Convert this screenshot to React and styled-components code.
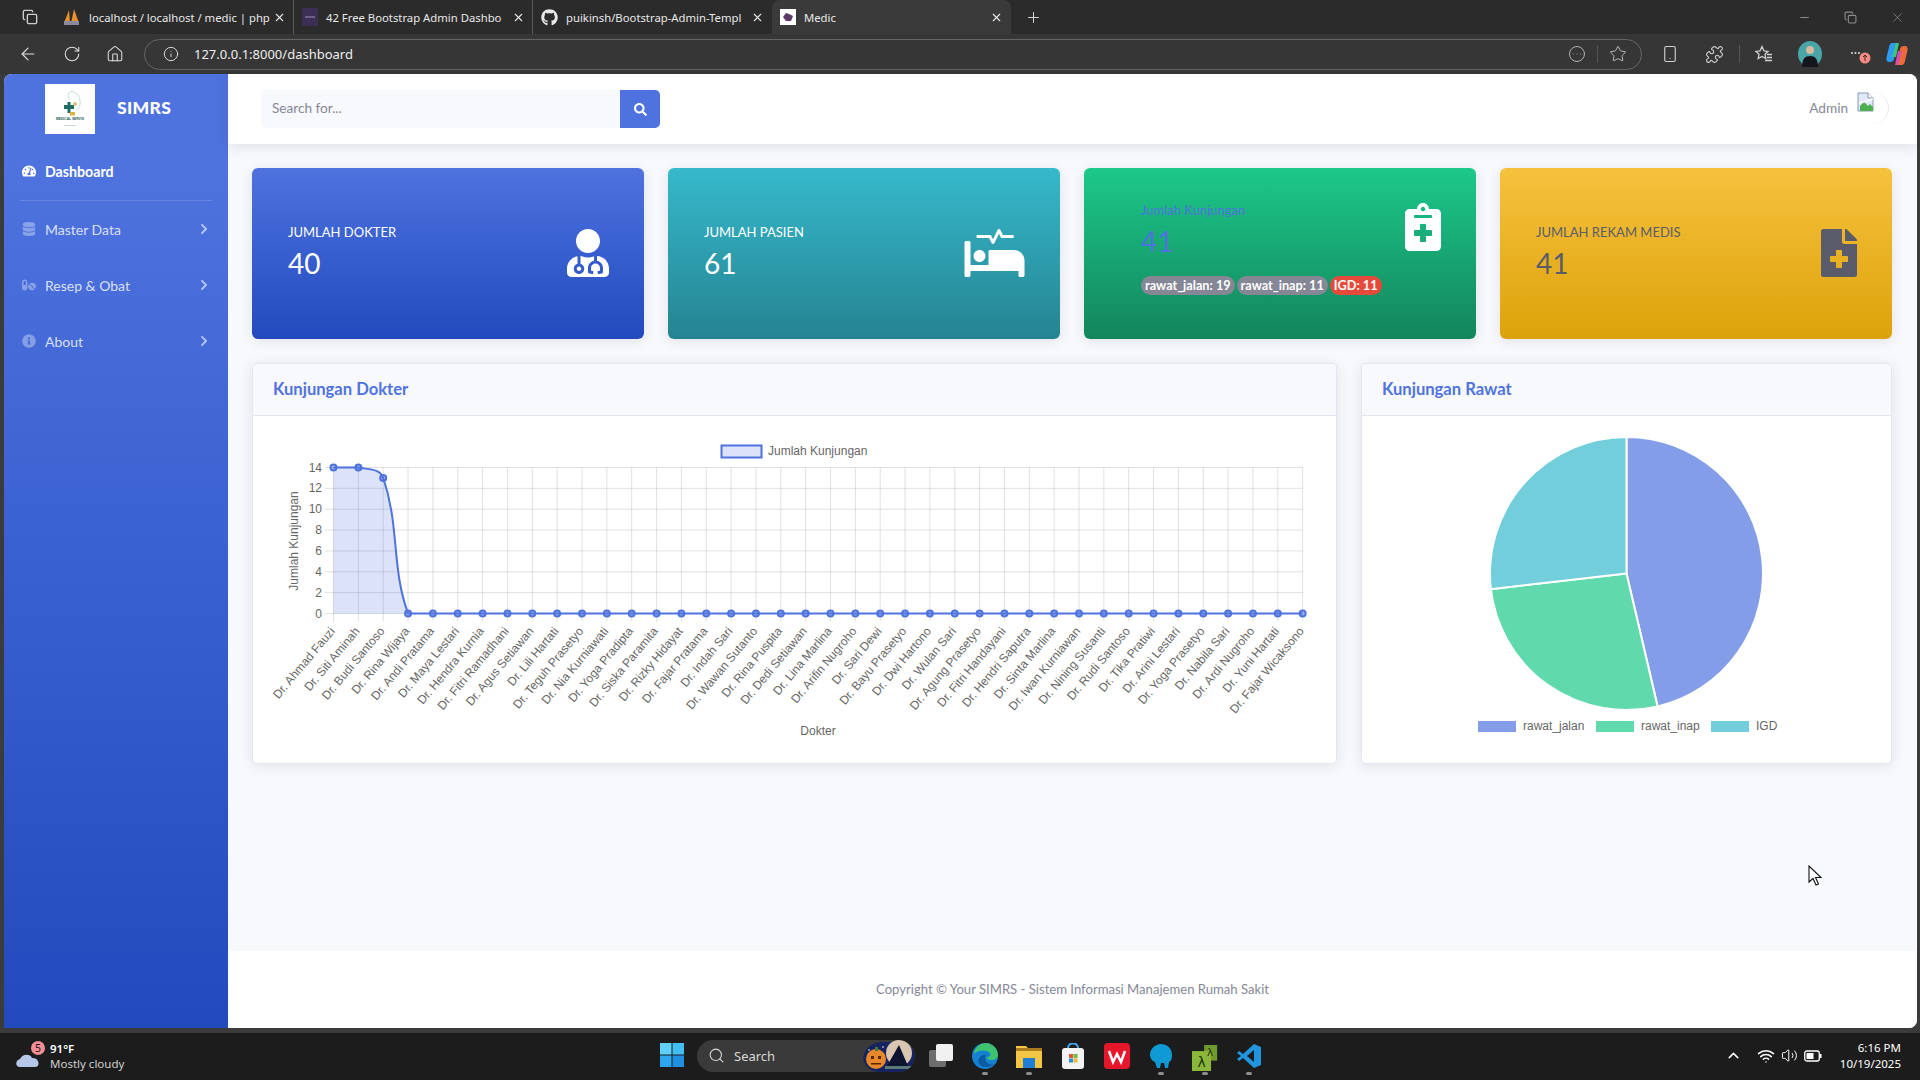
import * as React from 'react'
import styled, { createGlobalStyle } from 'styled-components'
import {
  ArrowLeft, RotateCw, Home, Info, Star, Smartphone, Puzzle, Plus, Minus, X, Copy,
  Search as SearchGlyph, ChevronUp, Wifi, Volume2, CircleEllipsis
} from 'lucide-react'
import {
  FaTachometerAlt, FaDatabase, FaPills, FaInfoCircle, FaChevronRight, FaSearch,
  FaUserMd, FaProcedures, FaNotesMedical, FaFileMedical, FaGithub
} from 'react-icons/fa'

const DOCTORS = [
  'Ahmad Fauzi', 'Siti Aminah', 'Budi Santoso', 'Rina Wijaya', 'Andi Pratama', 'Maya Lestari',
  'Hendra Kurnia', 'Fitri Ramadhani', 'Agus Setiawan', 'Lili Hartati', 'Teguh Prasetyo',
  'Nia Kurniawati', 'Yoga Pradipta', 'Siska Paramita', 'Rizky Hidayat', 'Fajar Pratama',
  'Indah Sari', 'Wawan Sutanto', 'Rina Puspita', 'Dedi Setiawan', 'Lina Marlina', 'Arifin Nugroho',
  'Sari Dewi', 'Bayu Prasetyo', 'Dwi Hartono', 'Wulan Sari', 'Agung Prasetyo', 'Fitri Handayani',
  'Hendri Saputra', 'Sinta Marlina', 'Iwan Kurniawan', 'Nining Susanti', 'Rudi Santoso',
  'Tika Pratiwi', 'Arini Lestari', 'Yoga Prasetyo', 'Nabila Sari', 'Ardi Nugroho', 'Yuni Hartati',
  'Fajar Wicaksono'
].map((n) => `Dr. ${n}`)

const VISITS = DOCTORS.map((_, i) => [14, 14, 13][i] || 0)

const GlobalStyle = createGlobalStyle`
  html, body { margin: 0; padding: 0; background: #3a3a3a; overflow: hidden; }
  * { box-sizing: border-box; }
`

const Screen = styled.div`
  position: relative;
  width: 1920px;
  height: 1080px;
  display: flex;
  flex-direction: column;
  background: #3b3b3b;
  font-family: "Lato", "Liberation Sans", sans-serif;
`

const TabStrip = styled.div`
  height: 34px;
  display: flex;
  align-items: flex-end;
  background: #2b2b2b;
  padding-left: 12px;
  color: #e8e8e8;
  font: 11.3px "Noto Sans", "Liberation Sans", sans-serif;
`

const WorkspaceBtn = styled.div`
  width: 36px;
  height: 34px;
  margin-right: 7px;
  display: flex;
  align-items: center;
  justify-content: center;
  color: #cfcfcf;
`

const Tab = styled.div`
  width: 239px;
  height: 34px;
  padding: 0 7px 0 8px;
  display: flex;
  align-items: center;
  gap: 8px;
  border-radius: ${({ $active }) => ($active ? '8px 8px 0 0' : '0')};
  background: ${({ $active }) => ($active ? '#3a3a3a' : 'transparent')};
  border-right: 1px solid ${({ $sep }) => ($sep ? '#5a5a5a' : 'transparent')};
`

const TabTitle = styled.span`
  flex: 1;
  min-width: 0;
  white-space: nowrap;
`

const WindowBtns = styled.div`
  margin-left: auto;
  height: 34px;
  display: flex;
  align-items: center;
  gap: 33px;
  padding-right: 15px;
  color: #8c8c8c;
`

const NewTab = styled.div`
  width: 40px;
  height: 34px;
  margin-left: 2px;
  display: flex;
  align-items: center;
  justify-content: center;
  color: #d8d8d8;
`

const Toolbar = styled.div`
  height: 40px;
  display: flex;
  align-items: center;
  background: #363636;
  color: #dedede;
  padding-left: 18px;
`

const NavIcons = styled.div`
  display: flex;
  align-items: center;
  gap: 25px;
  width: 126px;
`

const UrlBar = styled.div`
  width: 1498px;
  height: 31px;
  display: flex;
  align-items: center;
  padding: 0 14px 0 18px;
  border: 1px solid #666;
  border-radius: 16px;
  font: 13px "Noto Sans", "Liberation Sans", sans-serif;
  color: #eee;
`

const UrlText = styled.span`
  margin-left: 15px;
  flex: 1;
`

const UrlActions = styled.div`
  display: flex;
  align-items: center;
  gap: 11px;
  color: #bdbdbd;
`

const VSep = styled.i`
  display: block;
  width: 1px;
  height: 18px;
  background: #555;
`

const ToolIcons = styled.div`
  display: flex;
  align-items: center;
  color: #d0d0d0;
`

const ToolSlot = styled.span`
  display: flex;
  margin-left: ${({ $ml }) => $ml}px;
`

const Page = styled.div`
  height: 954px;
  margin: 0 3px 0 4px;
  display: flex;
  overflow: hidden;
  border-radius: 8px 8px 8px 0;
  background: #f8f9fc;
`

const Sidebar = styled.nav`
  width: 224px;
  flex: none;
  background: linear-gradient(180deg, #4e73df 10%, #224abe 100%);
`

const Brand = styled.div`
  height: 66px;
  padding: 10px 0 0 41px;
  display: flex;
  align-items: flex-start;
  gap: 22px;
`

const LogoBox = styled.div`
  width: 50px;
  height: 50px;
  background: #fff;
  flex: none;
`

const BrandName = styled.div`
  margin-top: 13px;
  color: #fff;
  font-size: 17.5px;
  font-weight: 900;
  letter-spacing: 0.3px;
`

const NavItem = styled.div`
  height: ${({ $active }) => ($active ? 60 : 56)}px;
  display: flex;
  align-items: center;
  padding: ${({ $active }) => ($active ? 2 : 0)}px 18px 0 17px;
  color: ${({ $active }) => ($active ? '#fff' : 'rgba(255,255,255,.8)')};
  font-size: ${({ $active }) => ($active ? 14.2 : 14)}px;
  font-weight: ${({ $active }) => ($active ? 700 : 400)};
`

const NavGlyph = styled.span`
  width: 16px;
  margin-right: 8px;
  display: flex;
  justify-content: center;
  font-size: 14px;
  color: ${({ $active }) => ($active ? '#fff' : 'rgba(255,255,255,.35)')};
`

const NavLabel = styled.span`
  flex: 1;
`

const NavArrow = styled.span`
  display: flex;
  font-size: 12px;
  color: rgba(255,255,255,.6);
`

const NavRule = styled.hr`
  margin: 0 16px;
  border: 0;
  border-top: 1px solid rgba(255,255,255,.15);
`

const Main = styled.div`
  flex: 1;
  min-width: 0;
  display: flex;
  flex-direction: column;
`

const Topbar = styled.header`
  height: 70px;
  display: flex;
  align-items: center;
  justify-content: space-between;
  padding: 0 28px 0 33px;
  background: #fff;
  box-shadow: 0 2px 14px rgba(58,59,69,.14);
`

const SearchForm = styled.div`
  width: 399px;
  height: 38px;
  display: flex;
  border-radius: 5px;
  overflow: hidden;
  background: #f8f9fc;
`

const SearchInput = styled.div`
  flex: 1;
  padding-left: 11px;
  line-height: 36px;
  font-size: 13.6px;
  color: #858796;
`

const SearchBtn = styled.div`
  width: 40px;
  display: flex;
  align-items: center;
  justify-content: center;
  background: #4e73df;
  color: #fff;
  font-size: 13px;
`

const UserBox = styled.div`
  display: flex;
  align-items: center;
  gap: 9px;
  margin-top: -2px;
  font-size: 13.6px;
  color: #858796;
`

const Avatar = styled.div`
  width: 32px;
  height: 32px;
  border-radius: 50%;
  display: flex;
  justify-content: flex-start;
  border-right: 1px solid #e6e6e6;
`

const Content = styled.main`
  flex: 1;
  padding: 24px 25px 0 24px;
`

const StatRow = styled.section`
  display: grid;
  grid-template-columns: repeat(4, minmax(0, 1fr));
  gap: 24px;
`

const StatCard = styled.div`
  height: 171px;
  padding: 0 35px 0 36px;
  display: flex;
  align-items: center;
  justify-content: space-between;
  border-radius: 6px;
  background: linear-gradient(180deg, ${({ $from }) => $from}, ${({ $to }) => $to});
  color: ${({ $ink }) => $ink};
  box-shadow: 0 2px 12px rgba(58,59,69,.12);
`

const StatText = styled.div`
  display: flex;
  flex-direction: column;
  margin-top: ${({ $shift }) => $shift ?? -6}px;
  margin-left: ${({ $indent }) => $indent || 0}px;
`

const StatLabel = styled.div`
  font-size: 13px;
  line-height: 20px;
  margin-bottom: 4px;
  text-transform: ${({ $plain }) => ($plain ? 'none' : 'uppercase')};
`

const StatValue = styled.div`
  font-size: 28px;
  line-height: 34px;
`

const BadgeRow = styled.div`
  display: flex;
  gap: 2px;
  margin-top: 18px;
`

const Badge = styled.span`
  height: 19px;
  padding: 0 4px;
  line-height: 19px;
  border-radius: 10px;
  font-size: 12.7px;
  font-weight: 700;
  color: #fff;
  background: ${({ $bg }) => $bg};
`

const StatIcon = styled.div`
  display: flex;
  margin-top: ${({ $shift }) => $shift ?? -2}px;
  margin-right: ${({ $trim }) => -($trim || 0)}px;
  color: ${({ $ink }) => $ink};
  font-size: 48px;
`

const BedIcon = styled(FaProcedures)`
  width: 61px;
  height: 48px;
`

const ChartRow = styled.section`
  display: grid;
  grid-template-columns: minmax(0, 1085fr) minmax(0, 531fr);
  gap: 24px;
  margin-top: 24px;
`

const Panel = styled.article`
  height: 401px;
  border: 1px solid #e3e6f0;
  border-radius: 5px;
  overflow: hidden;
  background: #fff;
  box-shadow: 0 2px 14px rgba(58,59,69,.12);
`

const PanelHead = styled.div`
  height: 52px;
  padding: 0 0 1px 20px;
  display: flex;
  align-items: center;
  background: #f8f9fc;
  border-bottom: 1px solid #e3e6f0;
  font-size: 16.6px;
  font-weight: 700;
  color: #4e73df;
`

const ChartSvg = styled.svg`
  display: block;
  margin-left: -1px;
  font-family: "Liberation Sans", Arial, sans-serif;
  font-size: 12px;
`

const Footer = styled.footer`
  height: 77px;
  padding-bottom: 2px;
  display: flex;
  align-items: center;
  justify-content: center;
  background: #fff;
  font-size: 13.1px;
  color: #858796;
`

const Taskbar = styled.div`
  margin-top: auto;
  height: 47px;
  padding-bottom: 2px;
  display: grid;
  grid-template-columns: 1fr auto 1fr;
  align-items: center;
  background: #1c1c1c;
  color: #fff;
  font: 12px "Noto Sans", "Liberation Sans", sans-serif;
`

const Weather = styled.div`
  display: flex;
  align-items: center;
  gap: 2px;
  padding-left: 16px;
`

const WeatherText = styled.div`
  line-height: 15px;
  font-size: 11.5px;
  color: #cfcfcf;
`

const Temp = styled.div`
  color: #fff;
  font-weight: 600;
`

const Dock = styled.div`
  display: flex;
  align-items: center;
  gap: 18px;
  margin-left: 2px;
`

const DockSearch = styled.div`
  width: 218px;
  height: 32px;
  margin: 0 -5px 0 -7px;
  display: flex;
  align-items: center;
  gap: 9px;
  padding-left: 11px;
  border-radius: 16px;
  background: #3a3a3a;
  color: #d8d8d8;
  font-size: 13px;
`

const SearchArt = styled.svg`
  margin-left: auto;
  border-radius: 16px;
`

const DockItem = styled.div`
  position: relative;
  display: flex;
  width: 26px;
  height: 26px;
  &::after {
    content: '';
    display: ${({ $open }) => ($open ? 'block' : 'none')};
    position: absolute;
    left: 10px;
    bottom: -6px;
    width: 6px;
    height: 3px;
    border-radius: 2px;
    background: #8d8d8d;
  }
`

const Tray = styled.div`
  justify-self: end;
  display: flex;
  align-items: center;
  gap: 6px;
  padding-right: 19px;
`

const TrayChevron = styled(ChevronUp)`
  margin-right: 9px;
`

const Clock = styled.div`
  margin-left: 12px;
  text-align: right;
  line-height: 16px;
  font-size: 11.5px;
`

const Cursor = styled.svg`
  position: absolute;
  left: 1808px;
  top: 865px;
`

function splinePath(points, top, bottom) {
  // same smoothing as a line chart with tension 0.4
  const clamp = (v) => Math.min(bottom, Math.max(top, v))
  let d = `M${points[0][0]},${points[0][1]}`
  const ctrl = points.map((p, i) => {
    const a = points[i - 1] || p
    const b = points[i + 1] || p
    const d01 = Math.hypot(p[0] - a[0], p[1] - a[1])
    const d12 = Math.hypot(b[0] - p[0], b[1] - p[1])
    const sum = d01 + d12 || 1
    const fa = 0.4 * d01 / sum
    const fb = 0.4 * d12 / sum
    return {
      prev: [p[0] - fa * (b[0] - a[0]), clamp(p[1] - fa * (b[1] - a[1]))],
      next: [p[0] + fb * (b[0] - a[0]), clamp(p[1] + fb * (b[1] - a[1]))]
    }
  })
  for (let i = 1; i < points.length; i++) {
    const c1 = ctrl[i - 1].next
    const c2 = ctrl[i].prev
    d += ` C${c1[0]},${c1[1]} ${c2[0]},${c2[1]} ${points[i][0]},${points[i][1]}`
  }
  return d
}

function LineChart() {
  const x0 = 333.5
  const stepX = 24.85
  const y0 = 613.5
  const y14 = 467.5
  const yOf = (v) => y0 - (v / 14) * (y0 - y14)
  const xOf = (i) => x0 + i * stepX
  const pts = VISITS.map((v, i) => [xOf(i), yOf(v)])
  const line = splinePath(pts, y14, y0)
  const grid = 'rgba(0,0,0,.12)'

  return (
    <ChartSvg width="1085" height="346" viewBox="252 416 1085 346">
      <rect x="721.5" y="445.5" width="40" height="12" fill="rgba(78,115,223,.2)" stroke="#4e73df" strokeWidth="2" />
      <text x="768" y="455" fill="#666">Jumlah Kunjungan</text>
      {[0, 2, 4, 6, 8, 10, 12, 14].map((v) => (
        <g key={v}>
          <line x1="325" x2={xOf(39)} y1={yOf(v)} y2={yOf(v)} stroke={grid} />
          <text x="322" y={yOf(v) + 4} fill="#666" textAnchor="end">{v}</text>
        </g>
      ))}
      {DOCTORS.map((name, i) => (
        <g key={i}>
          <line x1={xOf(i)} x2={xOf(i)} y1={y14} y2={y0 + 8} stroke={grid} />
          <text transform={`translate(${xOf(i) + 2},${y0 + 18}) rotate(-50)`} fill="#666" textAnchor="end">{name}</text>
        </g>
      ))}
      <text transform="translate(298,541) rotate(-90)" fill="#666" textAnchor="middle">Jumlah Kunjungan</text>
      <text x="818" y="735" fill="#666" textAnchor="middle">Dokter</text>
      <path d={`${line} L${xOf(39)},${y0} L${x0},${y0} Z`} fill="rgba(78,115,223,.2)" />
      <path d={line} fill="none" stroke="#4e73df" strokeWidth="2" />
      {pts.map(([x, y], i) => (
        <circle key={i} cx={x} cy={y} r="3" fill="rgba(78,115,223,.5)" stroke="#4e73df" strokeWidth="2" />
      ))}
    </ChartSvg>
  )
}

function PieChart() {
  const cx = 1626.5
  const cy = 573.5
  const r = 136.5
  const data = [
    { label: 'rawat_jalan', value: 19, color: '#839de9', box: 1478, text: 1523 },
    { label: 'rawat_inap', value: 11, color: '#60d9ad', box: 1596, text: 1641 },
    { label: 'IGD', value: 11, color: '#72cedb', box: 1711, text: 1756 }
  ]
  let angle = -Math.PI / 2
  const slices = data.map((d) => {
    const next = angle + (d.value / 41) * Math.PI * 2
    const large = next - angle > Math.PI ? 1 : 0
    const p = `M${cx},${cy} L${cx + r * Math.cos(angle)},${cy + r * Math.sin(angle)} A${r},${r} 0 ${large} 1 ${cx + r * Math.cos(next)},${cy + r * Math.sin(next)} Z`
    angle = next
    return { ...d, p }
  })

  return (
    <ChartSvg width="531" height="346" viewBox="1361 416 531 346">
      {slices.map((s) => <path key={s.label} d={s.p} fill={s.color} stroke="#fff" strokeWidth="2" />)}
      {slices.map((s) => (
        <g key={s.label}>
          <rect x={s.box} y="721" width="38" height="11" fill={s.color} />
          <text x={s.text} y="730" fill="#666">{s.label}</text>
        </g>
      ))}
    </ChartSvg>
  )
}

const PmaIcon = () => (
  <svg width="18" height="18" viewBox="0 0 18 18">
    <path d="M1 15 6 2l1 13zM8 15 11 1l5 14z" fill="#e8912d" />
    <rect x="1" y="13" width="15" height="4" fill="#8a8a9c" />
  </svg>
)

const ColorlibIcon = () => (
  <svg width="16" height="18" viewBox="0 0 16 18">
    <rect width="16" height="18" fill="#3c2f55" />
    <rect x="3" y="8" width="10" height="2" fill="#6d5f86" />
  </svg>
)

const MedicIcon = () => (
  <svg width="16" height="16" viewBox="0 0 16 16">
    <rect width="16" height="16" fill="#fff" />
    <path d="M3 8l3-4 3 1 4 2-2 5H6z" fill="#5b3a68" />
  </svg>
)

const FavoritesIcon = () => (
  <svg width="20" height="20" viewBox="0 0 20 20" fill="none" stroke="currentColor" strokeWidth="1.3">
    <path d="M8 2.5 10 7l4 .4-3 2.8.8 4.3L8 12.4 4.2 14.5 5 10.2 2 7.4 6 7z" />
    <path d="M13 10.5h5M13 13.500h5M11 16.500h7" />
  </svg>
)

const ProfilePic = () => (
  <svg width="24" height="26" viewBox="0 0 24 26">
    <ellipse cx="12" cy="13" rx="12" ry="13" fill="#4aa5a8" />
    <path d="M4 26c0-8 3-11 8-11s8 3 8 11z" fill="#15151c" />
    <circle cx="12" cy="9" r="4" fill="#d9b9a0" />
  </svg>
)

const CopilotIcon = () => (
  <svg width="22" height="24" viewBox="0 0 22 24">
    <path d="M6 1h5L8 17c-.5 2-2 3-4 3H3c-2 0-3-2-2.600-4L3 5c.4-2 1.500-4 3-4z" fill="#2f9bf0" />
    <path d="M16 23h-5l3-16c.5-2 2-3 4-3h1c2 0 3 2 2.600 4L19 19c-.4 2-1.500 4-3 4z" fill="#ee6a3a" />
    <path d="M10 1h3l-3 14H6z" fill="#38c77c" />
    <path d="M12 23H9l3-14h4z" fill="#d64fb0" />
  </svg>
)

const UpdateDots = () => (
  <svg width="24" height="22" viewBox="0 0 24 22">
    <circle cx="4" cy="10" r="1" fill="#ddd" />
    <circle cx="7.500" cy="10" r="1" fill="#ddd" />
    <circle cx="11" cy="10" r="1" fill="#ddd" />
    <circle cx="17" cy="15" r="5.500" fill="#f28b82" />
    <path d="M17 18v-6M15 14l2-2 2 2" stroke="#422" strokeWidth="1" fill="none" />
  </svg>
)

const LogoMark = () => (
  <svg width="50" height="50" viewBox="0 0 50 50">
    <path d="M25 16c-3-4-2-9 2-8.500 5 .5 9 6 8 13-.5 3-2 5-4 6" fill="none" stroke="#9ac7c4" strokeWidth=".6" />
    <path d="M20 19h3.500v-3h3v3H30v4h-3.500v4h-3v-4H20z" transform="translate(-1 2)" fill="#1e6e62" />
    <rect x="25" y="28" width="5" height="3.500" fill="#e0b040" />
    <circle cx="30" cy="20" r="2" fill="#d9c27a" />
    <text x="25" y="36" textAnchor="middle" fontSize="3.300" fontWeight="700" fill="#1a5a52" fontFamily="Liberation Sans">MEDICAL SERVIS</text>
    <text x="25" y="42" textAnchor="middle" fontSize="1.800" fill="#4a7a72" fontFamily="Liberation Sans">medical service</text>
  </svg>
)

const BrokenImage = () => (
  <svg width="18" height="20" viewBox="0 0 18 20">
    <path d="M1 1h10l5 5v13H1z" fill="#dfe9f8" stroke="#8b99ad" strokeWidth="1" />
    <path d="M3 14l4-4 4 4 2-2 3 3v4H3z" fill="#4caf50" />
    <path d="M11 1v5h5" fill="#fff" stroke="#8b99ad" />
    <path d="M2 11 16 7" stroke="#fff" strokeWidth="1.500" />
  </svg>
)

const WeatherIcon = () => (
  <svg width="32" height="32" viewBox="0 0 32 32">
    <path d="M4 27c-5 0-5-7 0-8 2-5 10-6 12-1 7-1 9 9 3 9z" fill="#b6c8ea" />
    <circle cx="22" cy="8" r="7" fill="#f28f96" />
    <text x="22" y="12" textAnchor="middle" fontSize="10.500" fill="#2a1214" fontFamily="Noto Sans">5</text>
  </svg>
)

const StartIcon = () => (
  <svg width="24" height="24" viewBox="0 0 24 24">
    <rect x="0" y="0" width="11.500" height="11.500" fill="#5fd0f7" />
    <rect x="12.500" y="0" width="11.500" height="11.500" fill="#44bdf2" />
    <rect x="0" y="12.500" width="11.500" height="11.500" fill="#2ca6ec" />
    <rect x="12.500" y="12.500" width="11.500" height="11.500" fill="#1f8fe2" />
  </svg>
)

const HalloweenArt = () => (
  <SearchArt width="52" height="32" viewBox="0 0 52 32">
    <path d="M0 20C0 8 10 2 20 2h16c9 0 16 6 16 14 0 9-7 16-16 16H12C5 32 0 27 0 20z" fill="#16235e" />
    <circle cx="36" cy="13" r="13" fill="#d9c6b0" />
    <path d="M24 26 36 5l9 21z" fill="#0c1430" />
    <rect x="22" y="26" width="28" height="3" fill="#5b7c78" />
    <circle cx="13" cy="19" r="10" fill="#e8882a" />
    <rect x="12" y="7" width="3" height="4" fill="#4a7a32" />
    <path d="M8 16h3v3H8zM15 16h3v3h-3zM8 23h10v1.500H8z" fill="#5a2405" />
    <circle cx="20" cy="7" r=".8" fill="#fff" />
    <circle cx="6" cy="10" r=".8" fill="#fff" />
  </SearchArt>
)

const TaskViewIcon = () => (
  <svg width="26" height="26" viewBox="0 0 26 26">
    <rect x="1" y="7" width="17" height="17" rx="2" fill="#6e6e6e" />
    <rect x="8" y="1" width="17" height="17" rx="2" fill="#f1f1f1" />
  </svg>
)

const EdgeIcon = () => (
  <svg width="26" height="26" viewBox="0 0 26 26">
    <circle cx="13" cy="13" r="13" fill="#1482d4" />
    <path d="M2 11C3 4 8 0 14 0c6 0 12 5 12 12 0 4-4 5-7 5-3 0-4-1-4-3 3 0 4-2 3-4-2-3-12-4-16 1z" fill="#3ec26e" />
    <path d="M13 24c-5 0-8-5-6-9 2-3 6-4 8-3-3 1-3 7 2 9 2 1 4 1 6 0-2 2-6 3-10 3z" fill="#0c5aa0" />
  </svg>
)

const ExplorerIcon = () => (
  <svg width="26" height="26" viewBox="0 0 26 26">
    <path d="M0 3h10l3 3h13v19H0z" fill="#f4c542" />
    <rect x="0" y="5" width="26" height="3" fill="#a97d1e" />
    <rect x="7" y="15" width="12" height="10" fill="#1f7fd4" />
  </svg>
)

const StoreIcon = () => (
  <svg width="26" height="26" viewBox="0 0 26 26">
    <path d="M8 5c0-6 10-6 10 0" fill="none" stroke="#41a5ee" strokeWidth="2" />
    <rect x="2" y="5" width="22" height="21" rx="3" fill="#f3f3f3" />
    <rect x="9" y="11" width="4" height="4" fill="#e8563a" />
    <rect x="13.500" y="11" width="4" height="4" fill="#6fbb3a" />
    <rect x="9" y="15.500" width="4" height="4" fill="#2b8fe0" />
    <rect x="13.500" y="15.500" width="4" height="4" fill="#f4b82e" />
  </svg>
)

const WpsIcon = () => (
  <svg width="26" height="26" viewBox="0 0 26 26">
    <rect width="26" height="26" rx="4" fill="#e8162b" />
    <path d="M5 8l4 11 4-8 4 8 4-11" fill="none" stroke="#fff" strokeWidth="2.500" />
  </svg>
)

const WorkbenchIcon = () => (
  <svg width="26" height="26" viewBox="0 0 26 26">
    <path d="M13 1c7 0 11 5 11 11 0 5-2 7-3 7l-1 6h-3l-1-5h-3l-1 5H9l-2-6c-3-1-5-4-5-7C2 6 7 1 13 1z" fill="#0f9ad6" />
  </svg>
)

const LambdaIcon = () => (
  <svg width="30" height="30" viewBox="0 0 30 30">
    <rect x="14" y="0" width="15" height="18" fill="#6e9a2e" />
    <rect x="0" y="7" width="22" height="23" fill="#8bb63c" />
    <text x="21" y="13" textAnchor="middle" fontSize="12" fill="#20330a" fontFamily="DejaVu Sans">λ</text>
    <text x="11" y="25" textAnchor="middle" fontSize="16" fill="#20330a" fontFamily="DejaVu Sans">λ</text>
  </svg>
)

const VsCodeIcon = () => (
  <svg width="26" height="26" viewBox="0 0 26 26">
    <path d="M18 1l7 3v18l-7 3-11-10-4 3-2-2 4-3-4-3 2-2 4 3z" fill="#2196e0" />
    <path d="M18 7l-7 6 7 6z" fill="#1c1c1c" />
  </svg>
)

const BatteryIcon = () => (
  <svg width="18" height="12" viewBox="0 0 18 12">
    <rect x=".75" y="1" width="14.500" height="10" rx="2" fill="none" stroke="#fff" strokeWidth="1.300" />
    <rect x="2.500" y="3" width="7" height="6" fill="#fff" />
    <rect x="16" y="4" width="1.500" height="4" fill="#fff" />
  </svg>
)

// trim = blank side of the square icon box, so the glyph itself sits on the card padding
const STATS = [
  { label: 'Jumlah Dokter', value: 40, from: '#4e73df', to: '#224abe', ink: '#fff', icon: <FaUserMd />, trim: 3 },
  { label: 'Jumlah Pasien', value: 61, from: '#36b9cc', to: '#258391', ink: '#fff', icon: <BedIcon />, trim: 0 },
  { label: 'Jumlah Rekam Medis', value: 41, from: '#f6c23e', to: '#dda20a', ink: '#5a5c69', icon: <FaFileMedical />, trim: 6 }
]

function StatTile({ stat }) {
  return (
    <StatCard $from={stat.from} $to={stat.to} $ink={stat.ink}>
      <StatText>
        <StatLabel>{stat.label}</StatLabel>
        <StatValue>{stat.value}</StatValue>
      </StatText>
      <StatIcon $ink={stat.ink} $trim={stat.trim}>{stat.icon}</StatIcon>
    </StatCard>
  )
}

export default function App() {
  return (
    <Screen>
      <GlobalStyle />
      <TabStrip>
        <WorkspaceBtn><Copy size={16} /></WorkspaceBtn>
        <Tab $sep><PmaIcon /><TabTitle>localhost / localhost / medic | php</TabTitle><X size={13} /></Tab>
        <Tab $sep><ColorlibIcon /><TabTitle>42 Free Bootstrap Admin Dashbo</TabTitle><X size={13} /></Tab>
        <Tab><FaGithub size={17} /><TabTitle>puikinsh/Bootstrap-Admin-Templ</TabTitle><X size={13} /></Tab>
        <Tab $active><MedicIcon /><TabTitle>Medic</TabTitle><X size={13} /></Tab>
        <NewTab><Plus size={17} strokeWidth={1.4} /></NewTab>
        <WindowBtns>
          <Minus size={13} />
          <Copy size={13} />
          <X size={15} strokeWidth={1.2} />
        </WindowBtns>
      </TabStrip>

      <Toolbar>
        <NavIcons>
          <ArrowLeft size={20} strokeWidth={1.4} />
          <RotateCw size={18} strokeWidth={1.4} />
          <Home size={18} strokeWidth={1.4} />
        </NavIcons>
        <UrlBar>
          <Info size={16} strokeWidth={1.3} />
          <UrlText>127.0.0.1:8000/dashboard</UrlText>
          <UrlActions>
            <CircleEllipsis size={18} strokeWidth={1.2} />
            <VSep />
            <Star size={18} strokeWidth={1.3} />
          </UrlActions>
        </UrlBar>
        <ToolIcons>
          <ToolSlot $ml={19}><Smartphone size={18} strokeWidth={1.5} /></ToolSlot>
          <ToolSlot $ml={26}><Puzzle size={19} strokeWidth={1.4} /></ToolSlot>
          <ToolSlot $ml={15}><VSep /></ToolSlot>
          <ToolSlot $ml={14}><FavoritesIcon /></ToolSlot>
          <ToolSlot $ml={24}><ProfilePic /></ToolSlot>
          <ToolSlot $ml={26}><UpdateDots /></ToolSlot>
          <ToolSlot $ml={14}><CopilotIcon /></ToolSlot>
        </ToolIcons>
      </Toolbar>

      <Page>
        <Sidebar>
          <Brand>
            <LogoBox><LogoMark /></LogoBox>
            <BrandName>SIMRS</BrandName>
          </Brand>
          <NavItem $active>
            <NavGlyph $active><FaTachometerAlt /></NavGlyph>
            <NavLabel>Dashboard</NavLabel>
          </NavItem>
          <NavRule />
          <NavItem>
            <NavGlyph><FaDatabase /></NavGlyph>
            <NavLabel>Master Data</NavLabel>
            <NavArrow><FaChevronRight /></NavArrow>
          </NavItem>
          <NavItem>
            <NavGlyph><FaPills /></NavGlyph>
            <NavLabel>Resep &amp; Obat</NavLabel>
            <NavArrow><FaChevronRight /></NavArrow>
          </NavItem>
          <NavItem>
            <NavGlyph><FaInfoCircle /></NavGlyph>
            <NavLabel>About</NavLabel>
            <NavArrow><FaChevronRight /></NavArrow>
          </NavItem>
        </Sidebar>

        <Main>
          <Topbar>
            <SearchForm>
              <SearchInput>Search for...</SearchInput>
              <SearchBtn><FaSearch /></SearchBtn>
            </SearchForm>
            <UserBox>
              Admin
              <Avatar><BrokenImage /></Avatar>
            </UserBox>
          </Topbar>

          <Content>
            <StatRow>
              <StatTile stat={STATS[0]} />
              <StatTile stat={STATS[1]} />
              <StatCard $from="#1cc88a" $to="#13855c" $ink="#4e73df">
                <StatText $shift={-12} $indent={21}>
                  <StatLabel $plain>Jumlah Kunjungan</StatLabel>
                  <StatValue>41</StatValue>
                  <BadgeRow>
                    <Badge $bg="#858796">rawat_jalan: 19</Badge>
                    <Badge $bg="#858796">rawat_inap: 11</Badge>
                    <Badge $bg="#e74a3b">IGD: 11</Badge>
                  </BadgeRow>
                </StatText>
                <StatIcon $ink="#fff" $shift={-54} $trim={6}><FaNotesMedical /></StatIcon>
              </StatCard>
              <StatTile stat={STATS[2]} />
            </StatRow>

            <ChartRow>
              <Panel>
                <PanelHead>Kunjungan Dokter</PanelHead>
                <LineChart />
              </Panel>
              <Panel>
                <PanelHead>Kunjungan Rawat</PanelHead>
                <PieChart />
              </Panel>
            </ChartRow>
          </Content>

          <Footer>Copyright © Your SIMRS - Sistem Informasi Manajemen Rumah Sakit</Footer>
        </Main>
      </Page>

      <Taskbar>
        <Weather>
          <WeatherIcon />
          <WeatherText>
            <Temp>91°F</Temp>
            Mostly cloudy
          </WeatherText>
        </Weather>
        <Dock>
          <DockItem><StartIcon /></DockItem>
          <DockSearch>
            <SearchGlyph size={17} strokeWidth={1.5} />
            Search
            <HalloweenArt />
          </DockSearch>
          <DockItem><TaskViewIcon /></DockItem>
          <DockItem $open><EdgeIcon /></DockItem>
          <DockItem $open><ExplorerIcon /></DockItem>
          <DockItem><StoreIcon /></DockItem>
          <DockItem><WpsIcon /></DockItem>
          <DockItem $open><WorkbenchIcon /></DockItem>
          <DockItem $open><LambdaIcon /></DockItem>
          <DockItem $open><VsCodeIcon /></DockItem>
        </Dock>
        <Tray>
          <TrayChevron size={17} />
          <Wifi size={18} />
          <Volume2 size={17} strokeWidth={1.4} />
          <BatteryIcon />
          <Clock>6:16 PM<br />10/19/2025</Clock>
        </Tray>
      </Taskbar>

      <Cursor width="16" height="22" viewBox="0 0 16 22">
        <path d="M1 1v16l4-3.500 3 6.500 2.500-1-3-6.500H13z" fill="#fff" stroke="#111" strokeWidth="1.100" />
      </Cursor>
    </Screen>
  )
}
